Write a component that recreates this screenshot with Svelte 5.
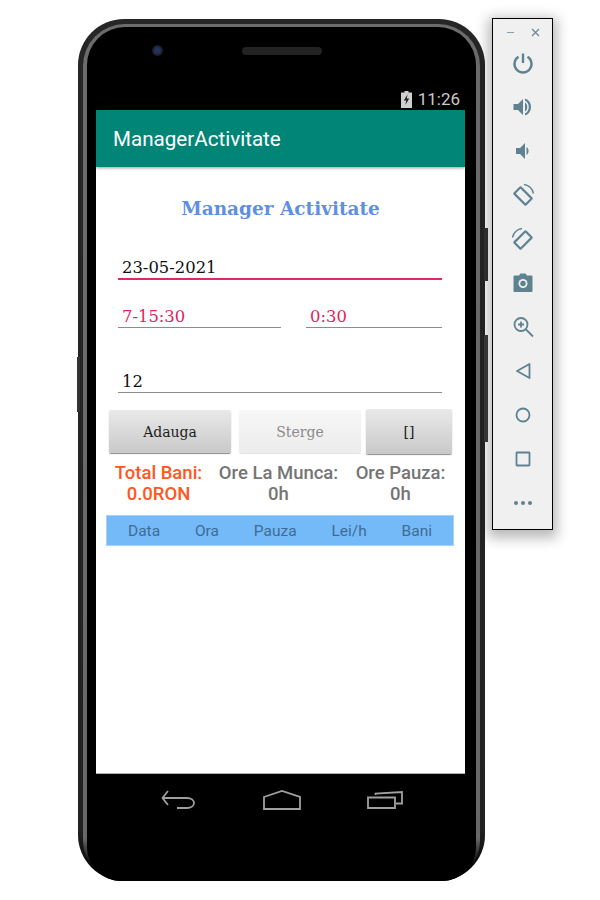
<script>
  const toolItems = ['power', 'volup', 'voldown', 'rotl', 'rotr', 'camera', 'zoom', 'back', 'home', 'square', 'more'];
  const columns = ['Data', 'Ora', 'Pauza', 'Lei/h', 'Bani'];
</script>

<div class="desk">
  <!-- the emulator frame -->
  <div class="phone">
    <span class="side side-left"></span>
    <span class="side side-right-a"></span>
    <span class="side side-right-b"></span>
    <div class="rim">
      <div class="face">
        <div class="earpiece">
          <span class="lens"></span>
          <span class="speaker"></span>
        </div>
        <div class="statusbar">
          <svg class="battery" width="11" height="17" viewBox="0 0 11 17">
            <path d="M3.500 0h4v1.500H11V17H0V1.500h3.500z" fill="#cfcfcf" />
            <path d="M6.500 3.500 2.800 9.600h2.400L4.400 14l3.800-6.400H5.800z" fill="#222" />
          </svg>
          <span class="clock">11:26</span>
        </div>
        <div class="screen">
          <div class="appbar">ManagerActivitate</div>
          <div class="content">
            <h1 class="title">Manager Activitate</h1>

            <input class="field focused" value="23-05-2021" />
            <div class="time-row">
              <input class="field pink" value="7-15:30" />
              <input class="field pink" value="0:30" />
            </div>
            <input class="field rate" value="12" />

            <div class="buttons">
              <button class="btn">Adauga</button>
              <button class="btn off" disabled>Sterge</button>
              <button class="btn small">[]</button>
            </div>

            <div class="totals">
              <div class="total orange">Total Bani:<br />0.0RON</div>
              <div class="total">Ore La Munca:<br />0h</div>
              <div class="total">Ore Pauza:<br />0h</div>
            </div>

            <div class="table-head">
              {#each columns as col}
                <span>{col}</span>
              {/each}
            </div>
          </div>
        </div>
        <div class="navbar">
          <svg width="35" height="20" viewBox="0 0 35 20" fill="none" stroke="#a0a0a0" stroke-width="1.800">
            <path d="M7 1 1.500 8 7 15M1.500 8H26c4 0 7 2 7 5s-3 5-7 5H16" />
          </svg>
          <svg width="38" height="20" viewBox="0 0 38 20" fill="none" stroke="#a0a0a0" stroke-width="1.800">
            <path d="M1 7 19 1l18 6v12H1z" />
          </svg>
          <svg width="36" height="20" viewBox="0 0 36 20" fill="none" stroke="#a0a0a0" stroke-width="1.800">
            <path d="M1 7.500h27V18H1zM8.500 5V3.500L35 2v11.500h-6" />
          </svg>
        </div>
      </div>
    </div>
  </div>

  <!-- emulator side toolbar -->
  <div class="toolbar">
    <div class="window-controls">
      <span class="minimize"></span>
      <svg width="9" height="9" viewBox="0 0 9 9" stroke="#6a8a98" stroke-width="1.300"><path d="M1 1l7 7M8 1 1 8" /></svg>
    </div>
    <div class="tools">
      {#each toolItems as item}
        <div class="tool">
          <svg width="24" height="24" viewBox="0 0 24 24" fill="#5f8291" stroke="none">
            {#if item === 'power'}
              <path d="M12 2.500v9.500" fill="none" stroke="#5f8291" stroke-width="2.400" />
              <path d="M7.500 5.800a8.500 8.500 0 1 0 9 0" fill="none" stroke="#5f8291" stroke-width="2.400" />
            {:else if item === 'volup'}
              <path d="M2.500 9h4.500l5-5v16l-5-5H2.500z" />
              <path d="M14 7.500c3 1.500 3 7.500 0 9zM14 3.500c8 2.500 8 14.500 0 17v-2c5-2.500 5-10.500 0-13z" />
            {:else if item === 'voldown'}
              <path d="M5 9h4l5-5v16l-5-5H5z" />
              <path d="M15.500 8c2.700 1.500 2.700 6.500 0 8z" />
            {:else if item === 'rotl'}
              <rect x="4" y="8.500" width="16" height="9" rx="0.500" transform="rotate(45 12 13)" fill="none" stroke="#5f8291" stroke-width="2.200" />
              <path d="M13 1.500c4.500 .5 8.500 4 9.500 9" fill="none" stroke="#5f8291" stroke-width="1.400" />
            {:else if item === 'rotr'}
              <rect x="4" y="8.500" width="16" height="9" rx="0.500" transform="rotate(-45 12 13)" fill="none" stroke="#5f8291" stroke-width="2.200" />
              <path d="M11 1.500c-4.500 .5-8.500 4-9.500 9" fill="none" stroke="#5f8291" stroke-width="1.400" />
            {:else if item === 'camera'}
              <path d="M8 4.500 9.500 2.500h5L16 4.500h4.500a1 1 0 0 1 1 1V20a1 1 0 0 1-1 1h-17a1 1 0 0 1-1-1V5.500a1 1 0 0 1 1-1z" />
              <circle cx="12" cy="12.500" r="4.500" fill="#f0f0f0" />
              <circle cx="12" cy="12.500" r="2.700" />
            {:else if item === 'zoom'}
              <circle cx="10" cy="9.500" r="6.500" fill="none" stroke="#5f8291" stroke-width="1.800" />
              <path d="M15 14.500 22 21.500M10 6.500v6M7 9.500h6" fill="none" stroke="#5f8291" stroke-width="1.800" />
            {:else if item === 'back'}
              <path d="M18.500 5v14L6 12z" fill="none" stroke="#5f8291" stroke-width="1.800" stroke-linejoin="round" />
            {:else if item === 'home'}
              <circle cx="12" cy="12" r="6.500" fill="none" stroke="#5f8291" stroke-width="1.800" />
            {:else if item === 'square'}
              <rect x="5.500" y="5.500" width="13" height="13" rx="0.500" fill="none" stroke="#5f8291" stroke-width="1.800" />
            {:else}
              <circle cx="5" cy="12" r="2" />
              <circle cx="12" cy="12" r="2" />
              <circle cx="19" cy="12" r="2" />
            {/if}
          </svg>
        </div>
      {/each}
    </div>
  </div>
</div>

<style>
  :global(body) {
    background: #fff;
  }

  .desk {
    position: relative;
    width: 600px;
    height: 900px;
    overflow: hidden;
    font-family: Roboto, sans-serif;
  }

  .phone {
    position: absolute;
    left: 78px;
    top: 19px;
    width: 407px;
    height: 862px;
    box-sizing: border-box;
    padding: 5px 5px 0;
    border-radius: 46px;
    background: linear-gradient(#262626, #222 94%, #0a0a0a 98%);
  }

  .side {
    position: absolute;
    background: #333;
    width: 4px;
  }
  .side-left {
    left: -1px;
    top: 338px;
    height: 55px;
    width: 3px;
  }
  .side-right-a {
    right: -3px;
    top: 209px;
    height: 53px;
  }
  .side-right-b {
    right: -3px;
    top: 316px;
    height: 107px;
    background: #3c3c3c;
  }

  .rim {
    height: 100%;
    box-sizing: border-box;
    padding: 3px 4px 0;
    border-radius: 42px 42px 40px 40px;
    background: linear-gradient(#6c6c6c, #686868 95%, #050505 98%);
  }

  .face {
    height: 100%;
    box-sizing: border-box;
    padding: 0 9px;
    border-radius: 38px 38px 34px 34px;
    background: #000;
    display: flex;
    flex-direction: column;
  }

  .earpiece {
    height: 61px;
    flex: none;
    display: flex;
    align-items: flex-start;
    padding: 19px 0 0 56px;
    box-sizing: border-box;
  }
  .lens {
    width: 11px;
    height: 11px;
    margin-top: -1px;
    border-radius: 50%;
    background: radial-gradient(circle, #26305a 0 35%, #15171c 70%);
  }
  .speaker {
    width: 80px;
    height: 8px;
    margin: 1px 0 0 79px;
    border-radius: 4px;
    background: #232323;
  }

  .statusbar {
    height: 22px;
    flex: none;
    display: flex;
    justify-content: flex-end;
    align-items: center;
    gap: 6px;
    padding-right: 7px;
    color: #c9c9c9;
    font-size: 17px;
  }

  .screen {
    width: 369px;
    height: 664px;
    box-sizing: border-box;
    flex: none;
    border-bottom: 1px solid #b0b0b0;
    background: #fff;
    display: flex;
    flex-direction: column;
  }

  .appbar {
    height: 57px;
    flex: none;
    box-sizing: border-box;
    padding: 0 0 0 17px;
    display: flex;
    align-items: center;
    background: #008577;
    color: #fff;
    font-size: 20.600px;
    box-shadow: 0 1px 3px rgba(0, 0, 0, 0.4);
  }

  .content {
    flex: 1;
    display: flex;
    flex-direction: column;
  }

  .title {
    margin: 29px 0 0;
    height: 26px;
    line-height: 26px;
    text-align: center;
    font-family: "DejaVu Serif", serif;
    font-size: 18.500px;
    font-weight: bold;
    color: #5f8fe3;
  }

  .field {
    display: block;
    height: 21px;
    padding: 5px 0 0 4px;
    border: none;
    border-bottom: 1px solid #8c8c8c;
    outline: none;
    background: none;
    box-sizing: content-box;
    font-family: "DejaVu Serif", serif;
    font-size: 16.400px;
    line-height: 21px;
    color: #111;
    min-width: 0;
  }
  .focused {
    margin: 30px 23px 0 22px;
    border-bottom: 2px solid #dc2a64;
  }
  .pink {
    color: #e0245e;
  }
  .time-row {
    display: grid;
    grid-template-columns: 163px 136px;
    gap: 25px;
    margin: 21px 23px 0 22px;
  }
  .time-row .field {
    width: calc(100% - 4px);
  }
  .rate {
    margin: 38px 23px 0 22px;
  }

  .buttons {
    margin: 16px 13px 0 13px;
    display: grid;
    grid-template-columns: 122px 122px 86px;
    column-gap: 8px;
    height: 45px;
    align-items: start;
  }
  .btn {
    height: 43px;
    margin-top: 1px;
    border: none;
    border-radius: 2px;
    background: linear-gradient(#e9e9e9, #c9c9c9);
    box-shadow: 0 1px 1px rgba(0, 0, 0, 0.45);
    font-family: "DejaVu Serif", serif;
    font-size: 14px;
    color: #1c1c1c;
    padding: 1px 0 0;
  }
  .off {
    background: linear-gradient(#f7f7f7, #ececec);
    box-shadow: 0 1px 1px rgba(0, 0, 0, 0.12);
    color: #8a8a8a;
  }
  .small {
    margin: 0 0 0 -3px;
    height: 45px;
    width: 86px;
  }

  .totals {
    margin: 9px 7px 0 7px;
    display: grid;
    grid-template-columns: 111px 129px 1fr;
    text-align: center;
    font-size: 18.500px;
    font-weight: 500;
    line-height: 21px;
    color: #757575;
  }
  .orange {
    color: #ff5722;
  }

  .table-head {
    margin: 10px 11px 0 10px;
    height: 31px;
    display: flex;
    align-items: center;
    padding: 0 22px;
    justify-content: space-between;
    background: #74baf8;
    color: #3f6c93;
    font-size: 15.500px;
    box-shadow: 0 0 0 1px #a6d3fa inset;
  }

  .navbar {
    height: 52px;
    padding: 0 64px 0 65px;
    display: flex;
    align-items: center;
    justify-content: space-between;
  }

  .toolbar {
    position: absolute;
    left: 492px;
    top: 18px;
    width: 61px;
    height: 512px;
    box-sizing: border-box;
    border: 1px solid #000;
    background: #f0f0f0;
    box-shadow: 0 4px 12px 4px rgba(0, 0, 0, 0.28);
  }
  .window-controls {
    height: 22px;
    box-sizing: border-box;
    padding: 5px 12px 0 0;
    display: flex;
    align-items: center;
    justify-content: flex-end;
    gap: 17px;
  }
  .minimize {
    width: 7px;
    height: 1px;
    background: #8aa0aa;
  }
  .tools {
    display: flex;
    flex-direction: column;
  }
  .tool {
    height: 44px;
    display: flex;
    justify-content: center;
    align-items: center;
  }
</style>
